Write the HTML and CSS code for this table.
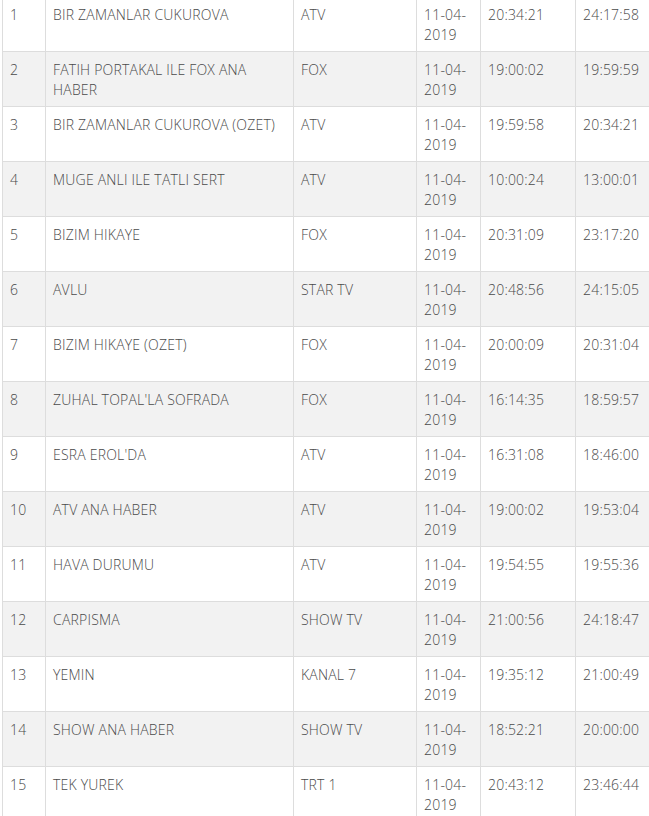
FILE: index.html
```html
<!DOCTYPE html>
<html>
<head>
<meta charset="utf-8">
<link rel="stylesheet" href="styles.css">
</head>
<body>
<table class="grid">
<colgroup>
<col class="c-no"><col class="c-name"><col class="c-ch"><col class="c-date"><col class="c-start"><col class="c-end">
</colgroup>
<tbody>
<tr><td>1</td><td>BIR ZAMANLAR CUKUROVA</td><td>ATV</td><td>11-04-2019</td><td>20:34:21</td><td>24:17:58</td></tr>
<tr><td>2</td><td>FATIH PORTAKAL ILE FOX ANA HABER</td><td>FOX</td><td>11-04-2019</td><td>19:00:02</td><td>19:59:59</td></tr>
<tr><td>3</td><td>BIR ZAMANLAR CUKUROVA (OZET)</td><td>ATV</td><td>11-04-2019</td><td>19:59:58</td><td>20:34:21</td></tr>
<tr><td>4</td><td>MUGE ANLI ILE TATLI SERT</td><td>ATV</td><td>11-04-2019</td><td>10:00:24</td><td>13:00:01</td></tr>
<tr><td>5</td><td>BIZIM HIKAYE</td><td>FOX</td><td>11-04-2019</td><td>20:31:09</td><td>23:17:20</td></tr>
<tr><td>6</td><td>AVLU</td><td>STAR TV</td><td>11-04-2019</td><td>20:48:56</td><td>24:15:05</td></tr>
<tr><td>7</td><td>BIZIM HIKAYE (OZET)</td><td>FOX</td><td>11-04-2019</td><td>20:00:09</td><td>20:31:04</td></tr>
<tr><td>8</td><td>ZUHAL TOPAL'LA SOFRADA</td><td>FOX</td><td>11-04-2019</td><td>16:14:35</td><td>18:59:57</td></tr>
<tr><td>9</td><td>ESRA EROL'DA</td><td>ATV</td><td>11-04-2019</td><td>16:31:08</td><td>18:46:00</td></tr>
<tr><td>10</td><td>ATV ANA HABER</td><td>ATV</td><td>11-04-2019</td><td>19:00:02</td><td>19:53:04</td></tr>
<tr><td>11</td><td>HAVA DURUMU</td><td>ATV</td><td>11-04-2019</td><td>19:54:55</td><td>19:55:36</td></tr>
<tr><td>12</td><td>CARPISMA</td><td>SHOW TV</td><td>11-04-2019</td><td>21:00:56</td><td>24:18:47</td></tr>
<tr><td>13</td><td>YEMIN</td><td>KANAL 7</td><td>11-04-2019</td><td>19:35:12</td><td>21:00:49</td></tr>
<tr><td>14</td><td>SHOW ANA HABER</td><td>SHOW TV</td><td>11-04-2019</td><td>18:52:21</td><td>20:00:00</td></tr>
<tr><td>15</td><td>TEK YUREK</td><td>TRT 1</td><td>11-04-2019</td><td>20:43:12</td><td>23:46:44</td></tr>
</tbody>
</table>
</body>
</html>
```
FILE: styles.css
```css
html, body {
  margin: 0;
  padding: 0;
  background: #ffffff;
  overflow: hidden;
}
.grid {
  border-collapse: collapse;
  table-layout: fixed;
  width: 660px;
  margin: -4px 0 0 2px;
  font-family: "Open Sans", "Liberation Sans", sans-serif;
  font-size: 14px;
  font-weight: 300;
  letter-spacing: 0.2px;
  color: #4a4a4a;
}
.c-no { width: 43px; }
.c-name { width: 248px; }
.c-ch { width: 123px; }
.c-date { width: 64px; }
.c-start { width: 95px; }
.c-end { width: 87px; }
.grid td {
  border: 1px solid #dddddd;
  padding: 8px 8px 6px 7px;
  height: 40px;
  line-height: 20px;
  vertical-align: top;
  box-sizing: content-box;
}
.grid tr:nth-child(even) td {
  background: #f2f2f2;
}
```
